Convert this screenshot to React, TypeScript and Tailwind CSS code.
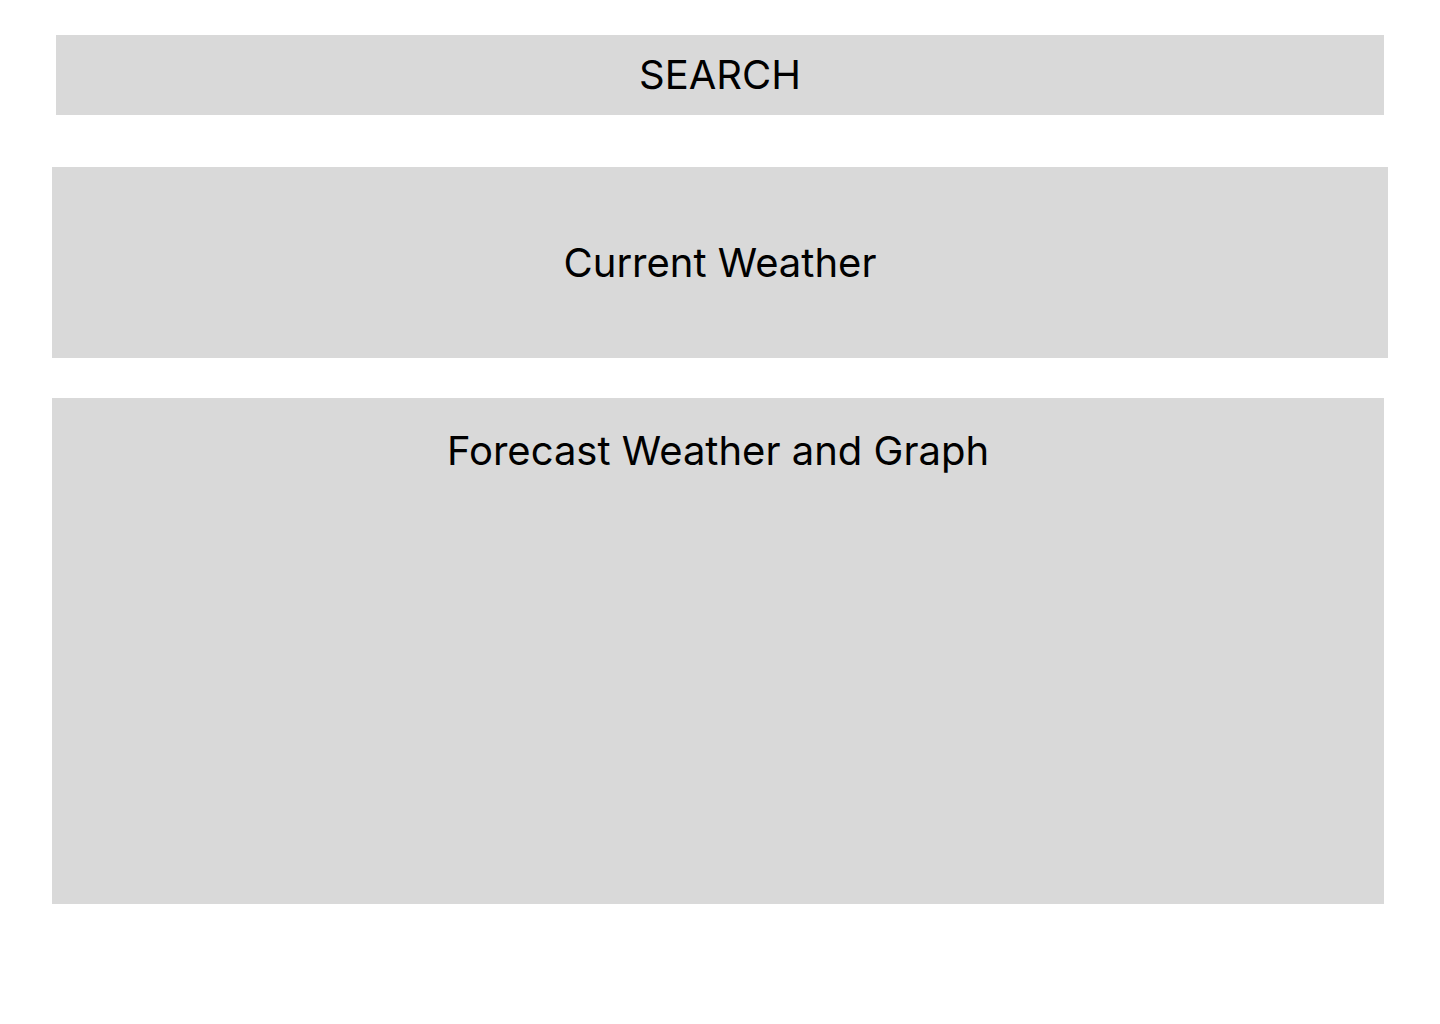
export default function App() {
	return (
		<div className="min-h-screen bg-white pt-[35px] font-['Inter',sans-serif] text-black">
			<div className="ml-[56px] flex h-[80px] w-[1328px] items-center justify-center bg-[#d9d9d9]">
				<span className="text-[40px] leading-none">SEARCH</span>
			</div>

			<div className="ml-[52px] mt-[52px] flex h-[191px] w-[1336px] items-center justify-center bg-[#d9d9d9]">
				<span className="text-[40px] leading-none">Current Weather</span>
			</div>

			<div className="ml-[52px] mt-[40px] flex h-[506px] w-[1332px] justify-center bg-[#d9d9d9] pt-[29px]">
				<span className="text-[40px] leading-[48px]">Forecast Weather and Graph</span>
			</div>
		</div>
	);
}
